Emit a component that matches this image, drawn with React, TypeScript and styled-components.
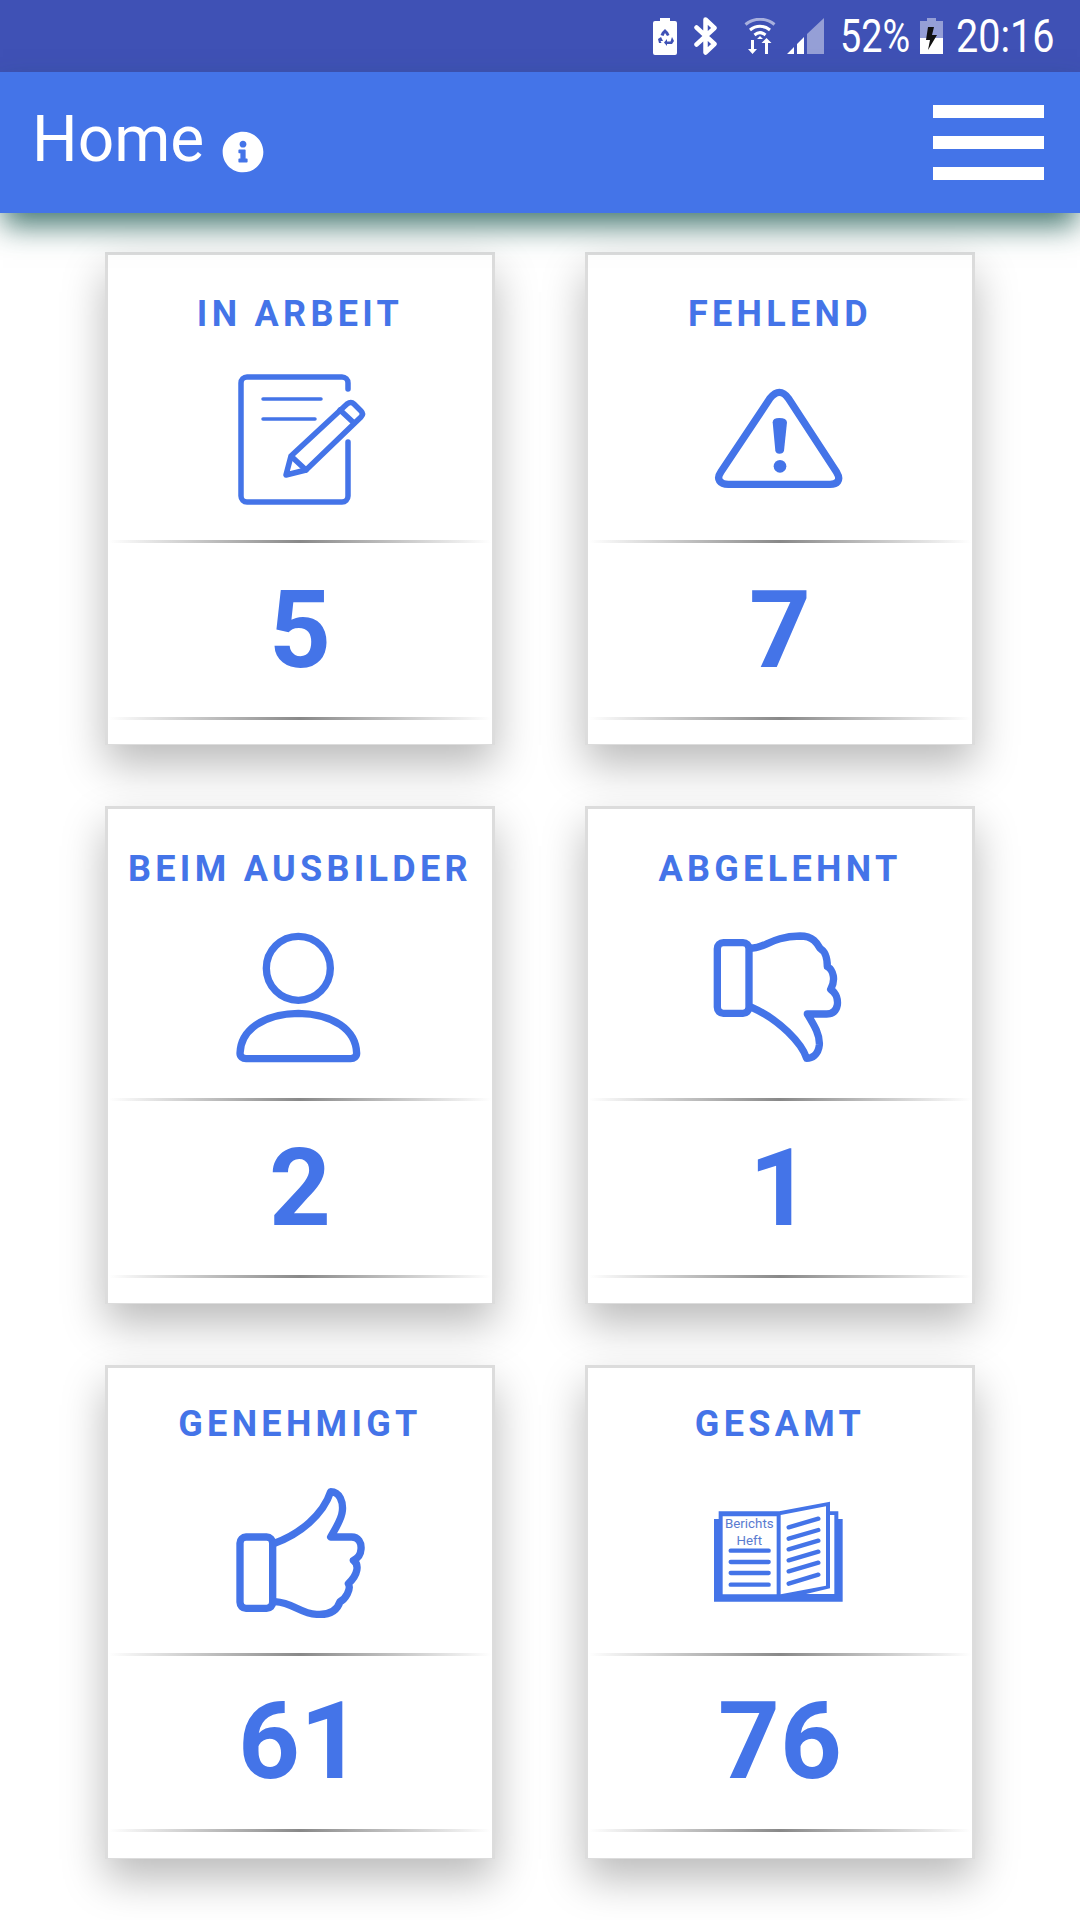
import React from "react";
import styled, { createGlobalStyle } from "styled-components";
import { FaInfoCircle } from "react-icons/fa";

const BLUE = "#4474e8";
const INDIGO = "#3f51b5";

const Global = createGlobalStyle`
  html, body { margin: 0; padding: 0; background: #fff; }
  body { font-family: Roboto, "Liberation Sans", sans-serif; }
  * { box-sizing: border-box; }
`;

const Page = styled.div`
  width: 1080px;
  height: 1920px;
  overflow: hidden;
  background: #fff;
  display: flex;
  flex-direction: column;
`;

const StatusBar = styled.div`
  height: 72px;
  background: ${INDIGO};
  display: flex;
  align-items: center;
  justify-content: flex-end;
  color: #fff;
  padding-right: 27px;
`;

const StatusIcon = styled.svg<{ $gap: number }>`
  display: block;
  margin-right: ${(p) => p.$gap}px;
  flex: none;
`;

const StatusText = styled.span<{ $w: number; $scale: number }>`
  display: block;
  width: ${(p) => p.$w}px;
  font-size: 46px;
  line-height: 72px;
  white-space: nowrap;
  transform: scaleX(${(p) => p.$scale});
  transform-origin: left center;
`;

const AppBar = styled.header`
  height: 141px;
  background: ${BLUE};
  box-shadow: 0 16px 28px -3px rgba(20, 85, 75, 0.78);
  position: relative;
  z-index: 2;
  display: flex;
  align-items: center;
  justify-content: space-between;
  padding: 0 36px 0 32px;
  color: #fff;
`;

const TitleGroup = styled.div`
  display: flex;
  align-items: flex-start;
  gap: 18px;
`;

const Title = styled.h1`
  margin: 0;
  font-size: 64px;
  line-height: 80px;
  font-weight: 400;
  transform: translateY(-3px);
`;

const InfoBadge = styled.span`
  display: block;
  margin-top: 28px;
  line-height: 0;
`;

const MenuButton = styled.div`
  width: 111px;
  display: flex;
  flex-direction: column;
  gap: 18px;
`;

const MenuBar = styled.span`
  display: block;
  height: 13px;
  background: #fff;
`;

const Grid = styled.main`
  display: grid;
  grid-template-columns: 390px 390px;
  justify-content: center;
  column-gap: 90px;
  row-gap: 61px;
  padding-top: 39px;
`;

const Card = styled.section<{ $h: number }>`
  height: ${(p) => p.$h}px;
  background: #fff;
  border: solid #dcdcdc;
  border-width: 3px 3px 1px 3px;
  box-shadow: 0 20px 40px rgba(0, 0, 0, 0.27);
  display: flex;
  flex-direction: column;
`;

const Head = styled.div<{ $h: number; $top: number }>`
  height: ${(p) => p.$h}px;
  padding-top: ${(p) => p.$top}px;
  display: flex;
  flex-direction: column;
  align-items: center;
  flex: none;
`;

const Label = styled.h2`
  margin: 0;
  color: ${BLUE};
  font-size: 36px;
  line-height: 40px;
  font-weight: 700;
  letter-spacing: 4.3px;
  white-space: nowrap;
`;

const IconSlot = styled.div<{ $shift: number }>`
  flex: 1;
  align-self: stretch;
  padding-top: ${(p) => p.$shift}px;
  display: flex;
  align-items: center;
  justify-content: center;
`;

const Divider = styled.div`
  height: 3px;
  flex: none;
  margin: 0 1px;
  background: linear-gradient(
    to right,
    rgba(130, 130, 130, 0),
    rgba(130, 130, 130, 0.95) 50%,
    rgba(130, 130, 130, 0)
  );
`;

const Count = styled.div<{ $h: number; $lift: number }>`
  height: ${(p) => p.$h}px;
  padding-bottom: ${(p) => p.$lift}px;
  flex: none;
  display: flex;
  align-items: center;
  justify-content: center;
  color: ${BLUE};
  font-size: 108px;
  font-weight: 700;
  line-height: 1;
`;

const Line = { fill: "none", stroke: BLUE, strokeLinecap: "round", strokeLinejoin: "round" } as const;

const EditIcon = () => (
  <svg width="160" height="150" viewBox="0 0 160 150">
    <g transform="translate(19 11)" {...Line} strokeWidth="5.5">
      <path d="M109 14V8a6 6 0 0 0-6-6H8a6 6 0 0 0-6 6V121a6 6 0 0 0 6 6H103a6 6 0 0 0 6-6V67" />
      <path d="M24 24H82M24 44H76" strokeWidth="3.5" />
      <path d="M47 100L52 81L108 29Q112 26 115 29L122 36Q125 39 122 42L67 95Z" />
      <path d="M53 82L67 95M101 35L115 48" />
    </g>
  </svg>
);

const WarnIcon = () => (
  <svg width="200" height="140" viewBox="0 0 600 420">
    <path {...Line} strokeWidth="22" d="M298 70C310 70 318 78 325 88L470 310C485 335 470 346 450 346H145C120 346 108 330 122 310L270 88C278 78 285 70 298 70Z" />
    <path fill={BLUE} d="M278 160Q278 147 298 147Q320 147 321 160L312 245Q310 254 298 254Q288 254 286 245Z" />
    <circle fill={BLUE} cx="300" cy="292" r="19" />
  </svg>
);

const PersonIcon = () => (
  <svg width="160" height="150" viewBox="0 0 480 450">
    <g {...Line} strokeWidth="22">
      <circle cx="235" cy="145" r="96" />
      <path d="M60 400C62 330 130 282 235 280C340 282 408 330 410 400C410 410 402 416 392 416H78C68 416 60 410 60 400Z" />
    </g>
  </svg>
);

const ThumbDownIcon = () => (
  <svg width="160" height="150" viewBox="0 0 480 450">
    <g {...Line} strokeWidth="22">
      <rect x="52" y="68" width="95" height="212" rx="18" />
      <path d="M150 85C200 85 210 50 300 48C340 48 352 70 360 85C378 95 382 120 382 140C400 150 408 180 392 208C410 220 414 240 412 255C408 275 395 282 380 282H322C345 320 360 345 358 375C355 405 335 415 320 415C305 370 240 300 155 262" />
    </g>
  </svg>
);

const ThumbUpIcon = () => (
  <svg width="160" height="160" viewBox="0 0 480 480">
    <g {...Line} strokeWidth="22">
      <rect x="60" y="198" width="98" height="214" rx="18" />
      <path d="M160 218C240 190 310 130 332 62C360 62 370 95 367 120C365 145 345 175 332 198H395C415 198 425 215 423 235C422 250 415 262 400 268C418 280 415 310 385 338C395 355 375 385 360 392C350 425 320 432 290 430C240 428 220 395 165 392" />
    </g>
  </svg>
);

const BookText = styled.text`
  font-family: Roboto, "Liberation Sans", sans-serif;
  font-size: 40px;
  fill: #5a7bd0;
  text-anchor: middle;
`;

const BookIcon = () => (
  <svg width="160" height="130" viewBox="0 0 480 390">
    <path fill={BLUE} d="M42 90H56V67H238L390 38V67H415V90H428V338H42Z" />
    <path fill="#fff" d="M68 82H230V316H68ZM242 78L378 52V290L242 316ZM390 78H403V315H318L390 298Z" />
    <BookText x="148" y="117">Berichts</BookText>
    <BookText x="148" y="168">Heft</BookText>
    <path stroke={BLUE} strokeWidth="13" strokeLinecap="round" d="M92 185H206M92 219H206M92 252H206M92 287H206M266 115L355 89M266 149L355 123M266 181L355 155M266 214L355 188M266 247L355 221M266 284L355 257" />
  </svg>
);

const StatusIcons = () => (
  <>
    <StatusIcon $gap={17} width="24" height="37" viewBox="0 0 24 37">
      <path fill="#fff" d="M7 0H17V3H22Q24 3 24 5V35Q24 37 22 37H2Q0 37 0 35V5Q0 3 2 3H7Z" />
      <path fill={INDIGO} d="M9 14L12 11L15 14L16.5 17L14 18L12 15L10.5 18L7.5 17ZM5 21L8 19L10 23H7.5L8.5 25H6ZM19 19L21 23L19 26H14V28L11 24.5L14 21V23.5H17.5Z" />
    </StatusIcon>
    <StatusIcon $gap={26} width="24" height="38" viewBox="0 0 24 38">
      <path {...Line} stroke="#fff" strokeWidth="4.5" d="M2.5 10.5L20.5 27L11.5 35.5V2.5L20.5 11L2.5 27.5" />
    </StatusIcon>
    <StatusIcon $gap={11} width="32" height="37" viewBox="0 0 32 37">
      <path fill="none" stroke="#fff" strokeOpacity="0.55" strokeWidth="3" d="M1.5 6.5C10 -0.5 22 -0.5 30.5 6.5" />
      <path fill="none" stroke="#fff" strokeWidth="3" d="M6 12C12 7 20 7 26 12M10.5 17C14 14 18 14 21.5 17" />
      <path fill="#fff" d="M13 21L16 18L19 21ZM7 22H10V31H13L8.5 36L4 31H7ZM21 25H17.5L22.5 20L27.5 25H24V36H21Z" />
    </StatusIcon>
    <StatusIcon $gap={16} width="37" height="36" viewBox="0 0 37 36">
      <path fill="#fff" fillOpacity="0.45" d="M37 0V36H20V16Z" />
      <path fill="#fff" d="M17 19V36H10V26ZM7 29V36H0Z" />
    </StatusIcon>
    <StatusText $w={80} $scale={0.82}>52%</StatusText>
    <StatusIcon $gap={13} width="23" height="36" viewBox="0 0 23 36">
      <path fill="#fff" fillOpacity="0.45" d="M7 0H16V3H23V20H0V3H7Z" />
      <path fill="#fff" d="M0 20H23V36H0Z" />
      <path fill="#111" d="M14 9H8L6 22H10L8 32L17 17H12Z" />
    </StatusIcon>
    <StatusText $w={97} $scale={0.86}>20:16</StatusText>
  </>
);

const cards = [
  { label: "IN ARBEIT", value: "5", icon: <EditIcon />, h: 493, head: 285, top: 39, count: 174, lift: 0, shift: 4 },
  { label: "FEHLEND", value: "7", icon: <WarnIcon />, h: 493, head: 285, top: 39, count: 174, lift: 0, shift: 4 },
  { label: "BEIM AUSBILDER", value: "2", icon: <PersonIcon />, h: 498, head: 289, top: 40, count: 174, lift: 0, shift: 2 },
  { label: "ABGELEHNT", value: "1", icon: <ThumbDownIcon />, h: 498, head: 289, top: 40, count: 174, lift: 0, shift: 2 },
  { label: "GENEHMIGT", value: "61", icon: <ThumbUpIcon />, h: 494, head: 285, top: 36, count: 173, lift: 4, shift: 4 },
  { label: "GESAMT", value: "76", icon: <BookIcon />, h: 494, head: 285, top: 36, count: 173, lift: 4, shift: 11 },
];

export default function App() {
  return (
    <Page>
      <Global />
      <StatusBar>
        <StatusIcons />
      </StatusBar>
      <AppBar>
        <TitleGroup>
          <Title>Home</Title>
          <InfoBadge>
            <FaInfoCircle size={42} />
          </InfoBadge>
        </TitleGroup>
        <MenuButton>
          <MenuBar />
          <MenuBar />
          <MenuBar />
        </MenuButton>
      </AppBar>
      <Grid>
        {cards.map((c) => (
          <Card key={c.label} $h={c.h}>
            <Head $h={c.head} $top={c.top}>
              <Label>{c.label}</Label>
              <IconSlot $shift={c.shift}>{c.icon}</IconSlot>
            </Head>
            <Divider />
            <Count $h={c.count} $lift={c.lift}>{c.value}</Count>
            <Divider />
          </Card>
        ))}
      </Grid>
    </Page>
  );
}
